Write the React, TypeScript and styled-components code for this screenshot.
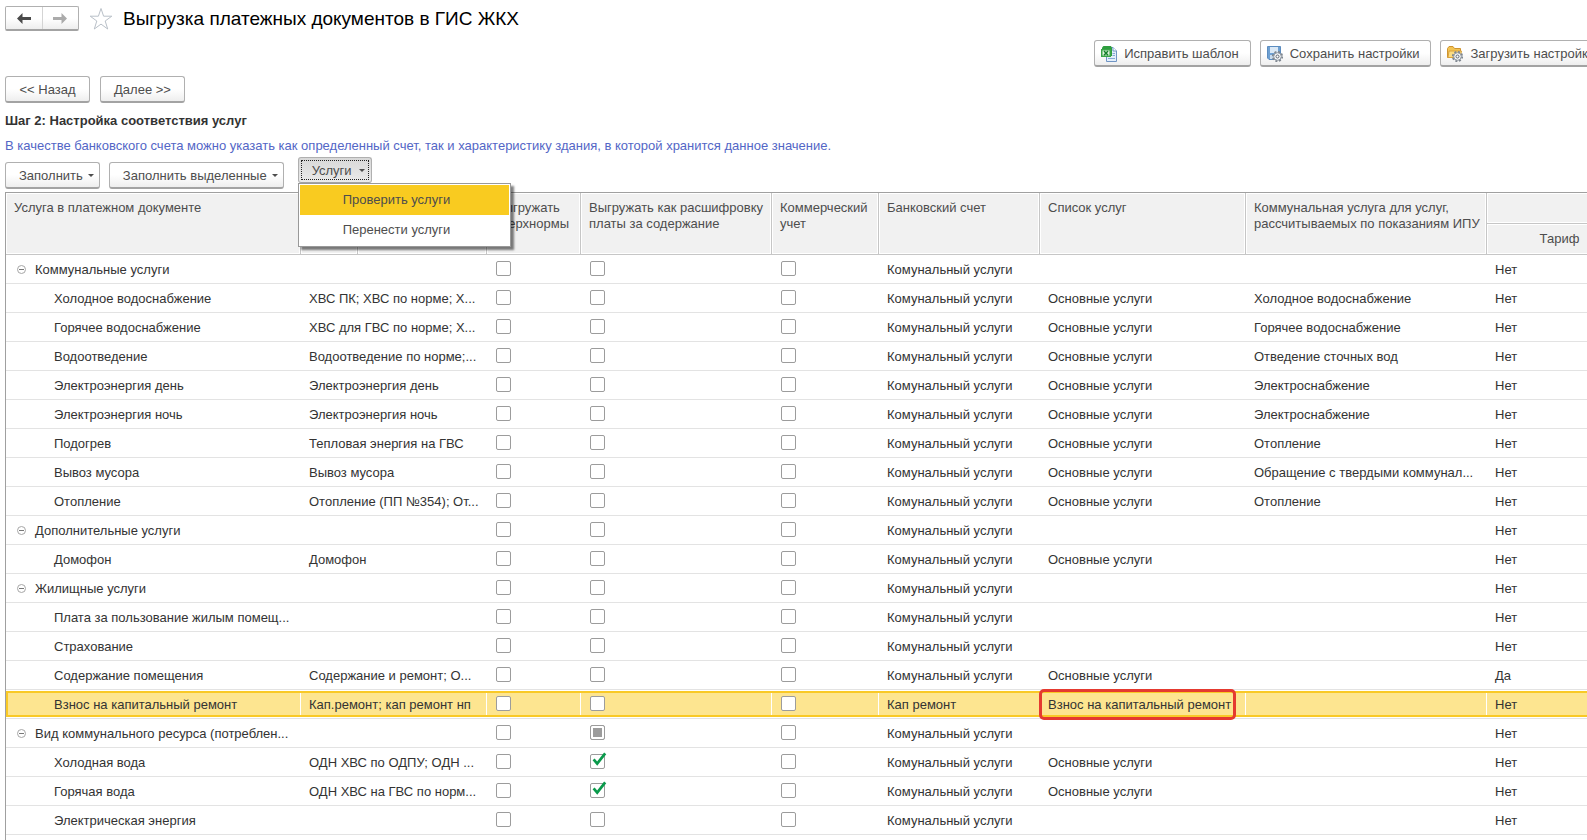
import React, { useEffect, useRef } from "react";
import styled, { createGlobalStyle, css } from "styled-components";

const Global = createGlobalStyle`
  * { box-sizing: border-box; }
  html, body { margin: 0; background: #fff; }
  body {
    font-family: "Liberation Sans", Arial, sans-serif;
    font-size: 13px;
    line-height: 16px;
    color: #333;
  }
  button, input { font: inherit; color: inherit; margin: 0; }
`;

const Page = styled.main`
  display: flex;
  flex-direction: column;
  height: 100vh;
  padding: 6px 0 0 5px;
  overflow: hidden;
`;

const TitleBar = styled.header`
  display: flex;
  flex: none;
  align-items: center;
  gap: 10px;
  height: 25px;
`;

const History = styled.nav`
  display: flex;
  width: 74px;
  height: 25px;
  border: 1px solid #b0b0b0;
  border-bottom: 2px solid #a3a3a3;
  border-radius: 2px;
  background: linear-gradient(#fff 50%, #eee);
`;

const HistoryButton = styled.button`
  display: flex;
  flex: 1;
  align-items: center;
  justify-content: center;
  padding: 0;
  border: 0;
  background: none;

  & + & {
    border-left: 1px solid #d4d4d4;
  }
`;

const StarButton = styled.button`
  display: flex;
  padding: 0;
  border: 0;
  background: none;
`;

const Title = styled.h1`
  margin: 0;
  font-size: 19px;
  line-height: 24px;
  font-weight: 400;
  color: #000;
`;

const Button = styled.button`
  display: flex;
  flex: none;
  align-items: center;
  justify-content: center;
  height: 27px;
  padding: 1px 13px 0;
  border: 1px solid #b0b0b0;
  border-bottom: 2px solid #a3a3a3;
  border-radius: 3px;
  background: linear-gradient(#fff 50%, #eee);
  color: #4d4d4d;
  white-space: nowrap;
`;

const StepButton = styled(Button)`
  width: 85px;
`;

const IconButton = styled(Button)`
  gap: 7px;
  padding: 1px 11px 0 6px;
`;

const MenuButton = styled(Button)<{ $open?: boolean }>`
  gap: 5px;
  padding: 1px 5px 0 13px;
  ${(p) =>
    p.$open &&
    css`
      gap: 7px;
      height: 26px;
      padding-right: 6px;
      border-bottom-width: 1px;
      background: linear-gradient(#d8d8d8, #eaeaea);
      outline: 1px dotted #222;
      outline-offset: -4px;
    `}
`;

const SettingsBar = styled.div`
  display: flex;
  flex: none;
  justify-content: flex-end;
  gap: 9px;
  margin: 9px -20px 0 0;
`;

const StepBar = styled.div`
  display: flex;
  flex: none;
  gap: 10px;
  margin-top: 9px;
`;

const StepTitle = styled.h2`
  margin: 10px 0 0;
  font-size: 13px;
  line-height: 16px;
`;

const Hint = styled.p`
  margin: 9px 0 0;
  color: #5366c6;
`;

const Commands = styled.div`
  display: flex;
  flex: none;
  gap: 9px;
  height: 27px;
  margin-top: 8px;
`;

const MenuHost = styled.div`
  position: relative;
  margin: -5px 0 0 5px;
`;

const Menu = styled.div`
  position: absolute;
  z-index: 2;
  top: 26px;
  left: 0;
  width: 213px;
  padding: 1px;
  border: 1px solid #999;
  background: #fff;
  box-shadow: 3px 3px 2px rgba(0, 0, 0, 0.5);
`;

const MenuItem = styled.button<{ $active?: boolean }>`
  display: block;
  width: 100%;
  height: 30px;
  padding: 0 0 0 43px;
  border: 0;
  text-align: left;
  color: #4d4d4d;
  background: ${(p) => (p.$active ? "#f9cb20" : "#fff")};
`;

const GridFrame = styled.div`
  flex: 1;
  min-height: 0;
  margin-top: 3px;
  overflow: hidden;
  border-top: 1px solid #a0a0a0;
  border-left: 1px solid #a0a0a0;
`;

const Grid = styled.table`
  width: 1765px;
  table-layout: fixed;
  border-collapse: separate;
  border-spacing: 0;
`;

const Col = styled.col<{ $w: number }>`
  width: ${(p) => p.$w}px;
`;

const HeadCell = styled.th<{ $center?: boolean }>`
  height: 31px;
  padding: 7px 4px 0 8px;
  vertical-align: top;
  text-align: ${(p) => (p.$center ? "center" : "left")};
  font-weight: 400;
  color: #4d4d4d;
  background: #f1f1f1;
  border-right: 1px solid #c6c6c6;
  border-bottom: 1px solid #c6c6c6;
  box-shadow: inset 0 0 0 1px #fff;
  white-space: nowrap;
`;

const Cell = styled.td`
  height: 29px;
  padding: 7px 8px 0;
  vertical-align: top;
  border-bottom: 1px solid #e3e3e3;
  white-space: nowrap;
`;

const TickCell = styled(Cell)`
  padding: 6px 0 0 9px;
`;

const Row = styled.tr<{ $selected?: boolean }>`
  ${(p) =>
    p.$selected &&
    css`
      ${Cell} {
        background:
          linear-gradient(#fff, #fff) right 3px / 1px 22px no-repeat,
          linear-gradient(
            #fff 1px,
            #f9c926 1px 3px,
            #fde590 3px 25px,
            #f9c926 25px 27px,
            #fff 27px
          );
      }
      ${Cell}:first-child {
        background:
          linear-gradient(#f9c926, #f9c926) left 1px / 2px 26px no-repeat,
          linear-gradient(#fff, #fff) right 3px / 1px 22px no-repeat,
          linear-gradient(
            #fff 1px,
            #f9c926 1px 3px,
            #fde590 3px 25px,
            #f9c926 25px 27px,
            #fff 27px
          );
      }
    `}
`;

const TreeLabel = styled.div<{ $child?: boolean }>`
  display: flex;
  align-items: center;
  gap: 9px;
  padding-left: ${(p) => (p.$child ? 40 : 3)}px;
`;

const Toggle = styled.button`
  display: flex;
  padding: 0 0 2px;
  border: 0;
  background: none;
`;

const Tick = styled.label`
  position: relative;
  display: block;
  width: 15px;
  height: 15px;

  input {
    display: block;
    width: 15px;
    height: 15px;
    appearance: none;
    border: 1px solid #9c9c9c;
    border-radius: 2px;
    background: #fff;
  }

  input:indeterminate {
    background: #9c9c9c;
    box-shadow: inset 0 0 0 2px #fff;
  }

  svg {
    position: absolute;
    top: -2px;
    left: 0;
  }
`;

const Marked = styled.span`
  position: relative;

  &::after {
    content: "";
    position: absolute;
    inset: -8px -5px -8px -9px;
    border: 3px solid #e53a30;
    border-radius: 5px;
  }
`;

const Caret = () => (
  <svg width="6" height="3" viewBox="0 0 6 3" aria-hidden="true">
    <path d="M0 0H6L3 3Z" fill="#4d4d4d" />
  </svg>
);

const Arrow = ({ forward }: { forward?: boolean }) => (
  <svg width="14" height="11" viewBox="0 0 14 11" aria-hidden="true">
    {forward ? (
      <path d="M14 5.5L8.5 0V4H0V7H8.5V11Z" fill="#ababab" />
    ) : (
      <path d="M0 5.5L5.5 0V4H14V7H5.5V11Z" fill="#4a4a4a" />
    )}
  </svg>
);

const Star = () => (
  <svg width="24" height="24" viewBox="0 0 24 24" aria-hidden="true">
    <path
      d="M12 1.5L14.6 9.2H22.8L16.2 14L18.7 22L12 17.1L5.3 22L7.8 14L1.2 9.2H9.4Z"
      fill="none"
      stroke="#b9c0c8"
    />
  </svg>
);

const SheetIcon = () => (
  <svg width="16" height="16" viewBox="0 0 16 16" aria-hidden="true">
    <path d="M5.5 1.5H12L15.5 5V15.5H5.5Z" fill="#e4effb" stroke="#6f94c4" />
    <path d="M12 1.5V5H15.5" fill="#fff" stroke="#6f94c4" />
    <path d="M7 12.5H14M11.5 7.5H14M11.5 9.5H14" stroke="#86a9d6" />
    <path d="M1 1.5L2.5 0H10L11 2V10H1Z" fill="#2f9e3f" />
    <path d="M0 3H10V11H0Z" fill="#3aa548" />
    <path d="M1.5 4.5H8.5V9.5H1.5Z" fill="#dff3dc" />
    <path d="M3 5L7 9.2M7 5L3 9.2" stroke="#15802a" strokeWidth="1.5" />
  </svg>
);

const Gear = () => (
  <>
    <circle cx="10.5" cy="10.5" r="4.6" fill="none" stroke="#7d858e" strokeWidth="2" strokeDasharray="2 1.6" />
    <circle cx="10.5" cy="10.5" r="3.8" fill="#f4f6f8" stroke="#8d959e" />
    <circle cx="10.5" cy="10.5" r="1.5" fill="#fff" stroke="#5e6772" />
  </>
);

const SaveIcon = () => (
  <svg width="16" height="16" viewBox="0 0 16 16" aria-hidden="true">
    <path d="M.5 .5H13.5V13.5H2L.5 12Z" fill="#6ea0d2" stroke="#5c8dc0" />
    <path d="M3 1H11V7H3Z" fill="#dbe9f6" />
    <path d="M3 9H8V13H3Z" fill="#c9dcee" />
    <Gear />
  </svg>
);

const FolderIcon = () => (
  <svg width="16" height="16" viewBox="0 0 16 16" aria-hidden="true">
    <path d="M.5 11.5V2.5L2 .5H6L7.5 2.5H13.5V11.5Z" fill="#f3c452" stroke="#cf9430" />
    <path d="M1 11.5L2 5H14.5L13 11.5Z" fill="#fbdc83" stroke="#d9a23c" />
    <Gear />
  </svg>
);

const Minus = () => (
  <svg width="9" height="9" viewBox="0 0 9 9" aria-hidden="true">
    <circle cx="4.5" cy="4.5" r="4" fill="#fff" stroke="#a6a6a6" />
    <path d="M2 4.5H7" stroke="#777" />
  </svg>
);

type Mark = "on" | "mixed" | "off";

const CheckBox = ({ mark = "off", label }: { mark?: Mark; label: string }) => {
  const box = useRef<HTMLInputElement>(null);
  useEffect(() => {
    if (box.current) box.current.indeterminate = mark === "mixed";
  }, [mark]);
  return (
    <Tick>
      <input ref={box} type="checkbox" aria-label={label} defaultChecked={mark === "on"} />
      {mark === "on" && (
        <svg width="17" height="15" viewBox="0 0 17 15" aria-hidden="true">
          <path d="M3.6 7.4L7.2 11.6L15.2 1.4" fill="none" stroke="#0a9a4b" strokeWidth="2.7" />
        </svg>
      )}
    </Tick>
  );
};

interface Service {
  name: string;
  group?: boolean;
  source?: string;
  detail?: Mark;
  account?: string;
  list?: string;
  meter?: string;
  tariff?: string;
  selected?: boolean;
}

const MAIN = "Основные услуги";

const services: Service[] = [
  { name: "Коммунальные услуги", group: true },
  { name: "Холодное водоснабжение", source: "ХВС ПК; ХВС по норме; Х...", list: MAIN, meter: "Холодное водоснабжение" },
  { name: "Горячее водоснабжение", source: "ХВС для ГВС по норме; Х...", list: MAIN, meter: "Горячее водоснабжение" },
  { name: "Водоотведение", source: "Водоотведение по норме;...", list: MAIN, meter: "Отведение сточных вод" },
  { name: "Электроэнергия день", source: "Электроэнергия день", list: MAIN, meter: "Электроснабжение" },
  { name: "Электроэнергия ночь", source: "Электроэнергия ночь", list: MAIN, meter: "Электроснабжение" },
  { name: "Подогрев", source: "Тепловая энергия на ГВС", list: MAIN, meter: "Отопление" },
  { name: "Вывоз мусора", source: "Вывоз мусора", list: MAIN, meter: "Обращение с твердыми коммунал..." },
  { name: "Отопление", source: "Отопление (ПП №354); От...", list: MAIN, meter: "Отопление" },
  { name: "Дополнительные услуги", group: true },
  { name: "Домофон", source: "Домофон", list: MAIN },
  { name: "Жилищные услуги", group: true },
  { name: "Плата за пользование жилым помещ..." },
  { name: "Страхование" },
  { name: "Содержание помещения", source: "Содержание и ремонт; О...", list: MAIN, tariff: "Да" },
  {
    name: "Взнос на капитальный ремонт",
    source: "Кап.ремонт; кап ремонт нп",
    account: "Кап ремонт",
    list: "Взнос на капитальный ремонт",
    selected: true,
  },
  { name: "Вид коммунального ресурса (потреблен...", group: true, detail: "mixed" },
  { name: "Холодная вода", source: "ОДН ХВС по ОДПУ; ОДН ...", detail: "on", list: MAIN },
  { name: "Горячая вода", source: "ОДН ХВС на ГВС по норм...", detail: "on", list: MAIN },
  { name: "Электрическая энергия" },
];

const columnWidths = [295, 57, 129, 94, 191, 107, 161, 206, 241, 142, 142];

const ServiceRow = ({ service: s }: { service: Service }) => (
  <Row $selected={s.selected}>
    <Cell>
      <TreeLabel $child={!s.group}>
        {s.group && (
          <Toggle aria-label="Свернуть">
            <Minus />
          </Toggle>
        )}
        {s.name}
      </TreeLabel>
    </Cell>
    <Cell colSpan={2}>{s.source}</Cell>
    <TickCell>
      <CheckBox label="Выгружать сверхнормы" />
    </TickCell>
    <TickCell>
      <CheckBox label="Выгружать как расшифровку" mark={s.detail} />
    </TickCell>
    <TickCell>
      <CheckBox label="Коммерческий учет" />
    </TickCell>
    <Cell>{s.account ?? "Комунальный услуги"}</Cell>
    <Cell>{s.selected ? <Marked>{s.list}</Marked> : s.list}</Cell>
    <Cell>{s.meter}</Cell>
    <Cell>{s.tariff ?? "Нет"}</Cell>
    <Cell />
  </Row>
);

const App = () => (
  <>
    <Global />
    <Page>
      <TitleBar>
        <History aria-label="История">
          <HistoryButton aria-label="Назад">
            <Arrow />
          </HistoryButton>
          <HistoryButton aria-label="Вперед">
            <Arrow forward />
          </HistoryButton>
        </History>
        <StarButton aria-label="В избранное">
          <Star />
        </StarButton>
        <Title>Выгрузка платежных документов в ГИС ЖКХ</Title>
      </TitleBar>

      <SettingsBar>
        <IconButton>
          <SheetIcon />
          Исправить шаблон
        </IconButton>
        <IconButton>
          <SaveIcon />
          Сохранить настройки
        </IconButton>
        <IconButton>
          <FolderIcon />
          Загрузить настройки
        </IconButton>
      </SettingsBar>

      <StepBar>
        <StepButton>&lt;&lt; Назад</StepButton>
        <StepButton>Далее &gt;&gt;</StepButton>
      </StepBar>

      <StepTitle>Шаг 2: Настройка соответствия услуг</StepTitle>
      <Hint>
        В качестве банковского счета можно указать как определенный счет, так и характеристику
        здания, в которой хранится данное значение.
      </Hint>

      <Commands>
        <MenuButton>
          Заполнить
          <Caret />
        </MenuButton>
        <MenuButton>
          Заполнить выделенные
          <Caret />
        </MenuButton>
        <MenuHost>
          <MenuButton $open aria-expanded="true">
            Услуги
            <Caret />
          </MenuButton>
          <Menu role="menu">
            <MenuItem role="menuitem" $active>
              Проверить услуги
            </MenuItem>
            <MenuItem role="menuitem">Перенести услуги</MenuItem>
          </Menu>
        </MenuHost>
      </Commands>

      <GridFrame>
        <Grid>
          <colgroup>
            {columnWidths.map((w, i) => (
              <Col key={i} $w={w} />
            ))}
          </colgroup>
          <thead>
            <tr>
              <HeadCell rowSpan={2}>Услуга в платежном документе</HeadCell>
              <HeadCell rowSpan={2} />
              <HeadCell rowSpan={2} />
              <HeadCell rowSpan={2}>
                Выгружать
                <br />
                сверхнормы
              </HeadCell>
              <HeadCell rowSpan={2}>
                Выгружать как расшифровку
                <br />
                платы за содержание
              </HeadCell>
              <HeadCell rowSpan={2}>
                Коммерческий
                <br />
                учет
              </HeadCell>
              <HeadCell rowSpan={2}>Банковский счет</HeadCell>
              <HeadCell rowSpan={2}>Список услуг</HeadCell>
              <HeadCell rowSpan={2}>
                Коммунальная услуга для услуг,
                <br />
                рассчитываемых по показаниям ИПУ
              </HeadCell>
              <HeadCell colSpan={2} />
            </tr>
            <tr>
              <HeadCell $center>Тариф</HeadCell>
              <HeadCell />
            </tr>
          </thead>
          <tbody>
            {services.map((s) => (
              <ServiceRow key={s.name} service={s} />
            ))}
          </tbody>
        </Grid>
      </GridFrame>
    </Page>
  </>
);

export default App;
